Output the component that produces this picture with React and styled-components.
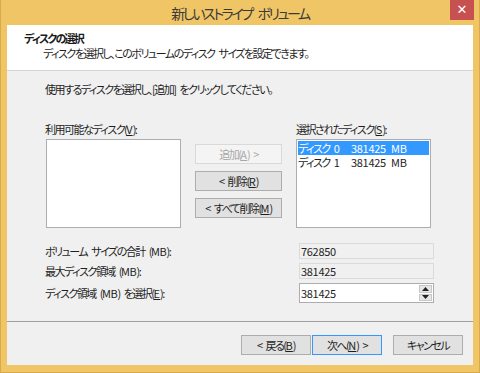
import React from 'react';
import styled, { createGlobalStyle } from 'styled-components';

const GlobalStyle = createGlobalStyle`
  html, body {
    margin: 0;
    padding: 0;
    background: #f0c566;
  }
  body {
    font-family: "Noto Sans CJK JP", "Noto Sans", sans-serif;
    font-size: 11px;
    letter-spacing: -1.5px;
    word-spacing: 3px;
    color: #1e1e1e;
    font-feature-settings: "palt";
  }
`

const Frame = styled.div`
  width: 480px;
  height: 373px;
  box-sizing: border-box;
  background: #f0c566;
  border: 1px solid #d9a94a;
  border-top: none;
  display: flex;
  flex-direction: column;
`

const TitleBar = styled.div`
  height: 25px;
  display: grid;
  grid-template-columns: 1fr auto 1fr;
  align-items: start;
`

const Title = styled.div`
  grid-column: 2;
  font-size: 14px;
  line-height: 26px;
  color: #3a3a3a;
  letter-spacing: -2.4px;
  word-spacing: 5px;
`

const CloseButton = styled.div`
  grid-column: 3;
  justify-self: end;
  margin-right: 5px;
  width: 24px;
  height: 20px;
  background: #c75050;
  color: #fff;
  font-size: 13px;
  font-weight: bold;
  letter-spacing: 0;
  line-height: 19px;
  text-align: center;
  font-family: "DejaVu Sans", sans-serif;
`

const Client = styled.div`
  flex: 1;
  margin: 0 6px 7px 6px;
  display: flex;
  flex-direction: column;
  background: #f0f0f0;
`

const Header = styled.div`
  height: 46px;
  background: #fff;
  border-bottom: 1px solid #d5d5d5;
  box-sizing: border-box;
  padding: 6px 0 0 17px;
`

const HeaderTitle = styled.div`
  font-weight: bold;
  line-height: 15px;
  color: #1a1a1a;
  letter-spacing: -1.8px;
`

const HeaderSub = styled.div`
  padding-left: 19px;
  line-height: 15px;
`

const Body = styled.div`
  height: 251px;
  box-sizing: border-box;
  padding: 10px 0 0 38px;
  border-bottom: 1px solid #a0a0a0;
`

const Text = styled.div`
  line-height: 16px;
  white-space: nowrap;
`

const Lists = styled.div`
  margin-top: 24px;
  display: grid;
  grid-template-columns: 135px 87px 135px;
  column-gap: 14px;
  margin-left: 1px;
`

const ListColumn = styled.div`
  display: flex;
  flex-direction: column;
  gap: 2px;
`

const Label = styled.div`
  line-height: 16px;
  white-space: nowrap;
  margin-left: ${p => p.$shift || 0}px;
`

const ListBox = styled.div`
  height: 89px;
  box-sizing: border-box;
  background: #fff;
  border: 1px solid #abadb3;
  padding: 1px;
`

const ListRow = styled.div`
  display: flex;
  height: 14px;
  line-height: 14px;
  background: ${p => (p.$selected ? '#3399ff' : 'transparent')};
  color: ${p => (p.$selected ? '#fff' : '#1e1e1e')};
`

const Cell = styled.span`
  display: inline-block;
  width: ${p => p.$w}px;
  white-space: nowrap;
  letter-spacing: ${p => (p.$num ? '-0.3px' : '-1.5px')};
`

const ButtonColumn = styled.div`
  padding-top: 23px;
  display: flex;
  flex-direction: column;
  gap: 7px;
`

const Button = styled.div`
  height: 20px;
  box-sizing: border-box;
  width: ${p => (p.$w ? `${p.$w}px` : 'auto')};
  border: 1px solid ${p => (p.$default ? '#3399ff' : p.$disabled ? '#d9d9d9' : '#adadad')};
  background: ${p => (p.$disabled ? '#f4f4f4' : '#e1e1e1')};
  color: ${p => (p.$disabled ? '#a8a8a8' : '#1e1e1e')};
  text-align: center;
  line-height: 18px;
  white-space: nowrap;
`

const Key = styled.span`
  text-decoration: underline;
  text-underline-offset: 1px;
  letter-spacing: 0;
`

const Num = styled.span`
  letter-spacing: -0.3px;
`

const Fields = styled.div`
  margin-top: 15px;
  display: grid;
  grid-template-columns: 254px 135px;
  grid-template-rows: 16px 16px 20px;
  row-gap: 4px;
  align-items: center;
`

const FieldBox = styled.div`
  height: ${p => p.$h || 16}px;
  box-sizing: border-box;
  border: 1px solid ${p => (p.$readOnly ? '#dadada' : '#abadb3')};
  background: ${p => (p.$readOnly ? '#f0f0f0' : '#fff')};
  line-height: ${p => (p.$h || 16) - 2}px;
  letter-spacing: -0.3px;
  padding-left: 1px;
  display: flex;
  justify-content: space-between;
`

const Spin = styled.div`
  width: 13px;
  display: flex;
  flex-direction: column;
  gap: 1px;
  padding: 1px 1px 1px 0;
`

const SpinButton = styled.div`
  flex: 1;
  background: #e6e6e6;
  border: 1px solid #c8c8c8;
  display: flex;
  align-items: center;
  justify-content: center;
`

const Footer = styled.div`
  flex: 1;
  display: flex;
  justify-content: flex-end;
  align-items: flex-start;
  padding: 13px 10px 0 0;
`

const NavGroup = styled.div`
  display: flex;
  gap: 1px;
  margin-right: 11px;
`

const Arrow = ({ up }) => (
  <svg width="7" height="4" viewBox="0 0 7 4">
    <path d={up ? 'M0 4 L3.5 0 L7 4 Z' : 'M0 0 L3.5 4 L7 0 Z'} fill="#222" />
  </svg>
)

export default function App() {
  return (
    <>
      <GlobalStyle />
      <Frame>
        <TitleBar>
          <Title>新しいストライプ ボリューム</Title>
          <CloseButton>✕</CloseButton>
        </TitleBar>
        <Client>
          <Header>
            <HeaderTitle>ディスクの選択</HeaderTitle>
            <HeaderSub>ディスクを選択し、このボリュームのディスク サイズを設定できます。</HeaderSub>
          </Header>
          <Body>
            <Text>使用するディスクを選択し、[追加] をクリックしてください。</Text>
            <Lists>
              <ListColumn>
                <Label $shift={-1}>利用可能なディスク(<Key>V</Key>):</Label>
                <ListBox />
              </ListColumn>
              <ButtonColumn>
                <Button $disabled>追加(<Key>A</Key>) &gt;</Button>
                <Button>&lt; 削除(<Key>R</Key>)</Button>
                <Button>&lt; すべて削除(<Key>M</Key>)</Button>
              </ButtonColumn>
              <ListColumn>
                <Label>選択されたディスク(<Key>S</Key>):</Label>
                <ListBox>
                  <ListRow $selected><Cell $w={53}>ディスク 0</Cell><Cell $w={70} $num>381425 MB</Cell></ListRow>
                  <ListRow><Cell $w={53}>ディスク 1</Cell><Cell $w={70} $num>381425 MB</Cell></ListRow>
                </ListBox>
              </ListColumn>
            </Lists>
            <Fields>
              <Label>ボリューム サイズの合計 (<Num>MB</Num>):</Label>
              <FieldBox $readOnly>762850</FieldBox>
              <Label>最大ディスク領域 (<Num>MB</Num>):</Label>
              <FieldBox $readOnly>381425</FieldBox>
              <Label>ディスク領域 (<Num>MB</Num>) を選択(<Key>E</Key>):</Label>
              <FieldBox $h={20}>
                381425
                <Spin>
                  <SpinButton><Arrow up /></SpinButton>
                  <SpinButton><Arrow /></SpinButton>
                </Spin>
              </FieldBox>
            </Fields>
          </Body>
          <Footer>
            <NavGroup>
              <Button $w={70}>&lt; 戻る(<Key>B</Key>)</Button>
              <Button $w={70} $default>次へ(<Key>N</Key>) &gt;</Button>
            </NavGroup>
            <Button $w={70}>キャンセル</Button>
          </Footer>
        </Client>
      </Frame>
    </>
  )
}
